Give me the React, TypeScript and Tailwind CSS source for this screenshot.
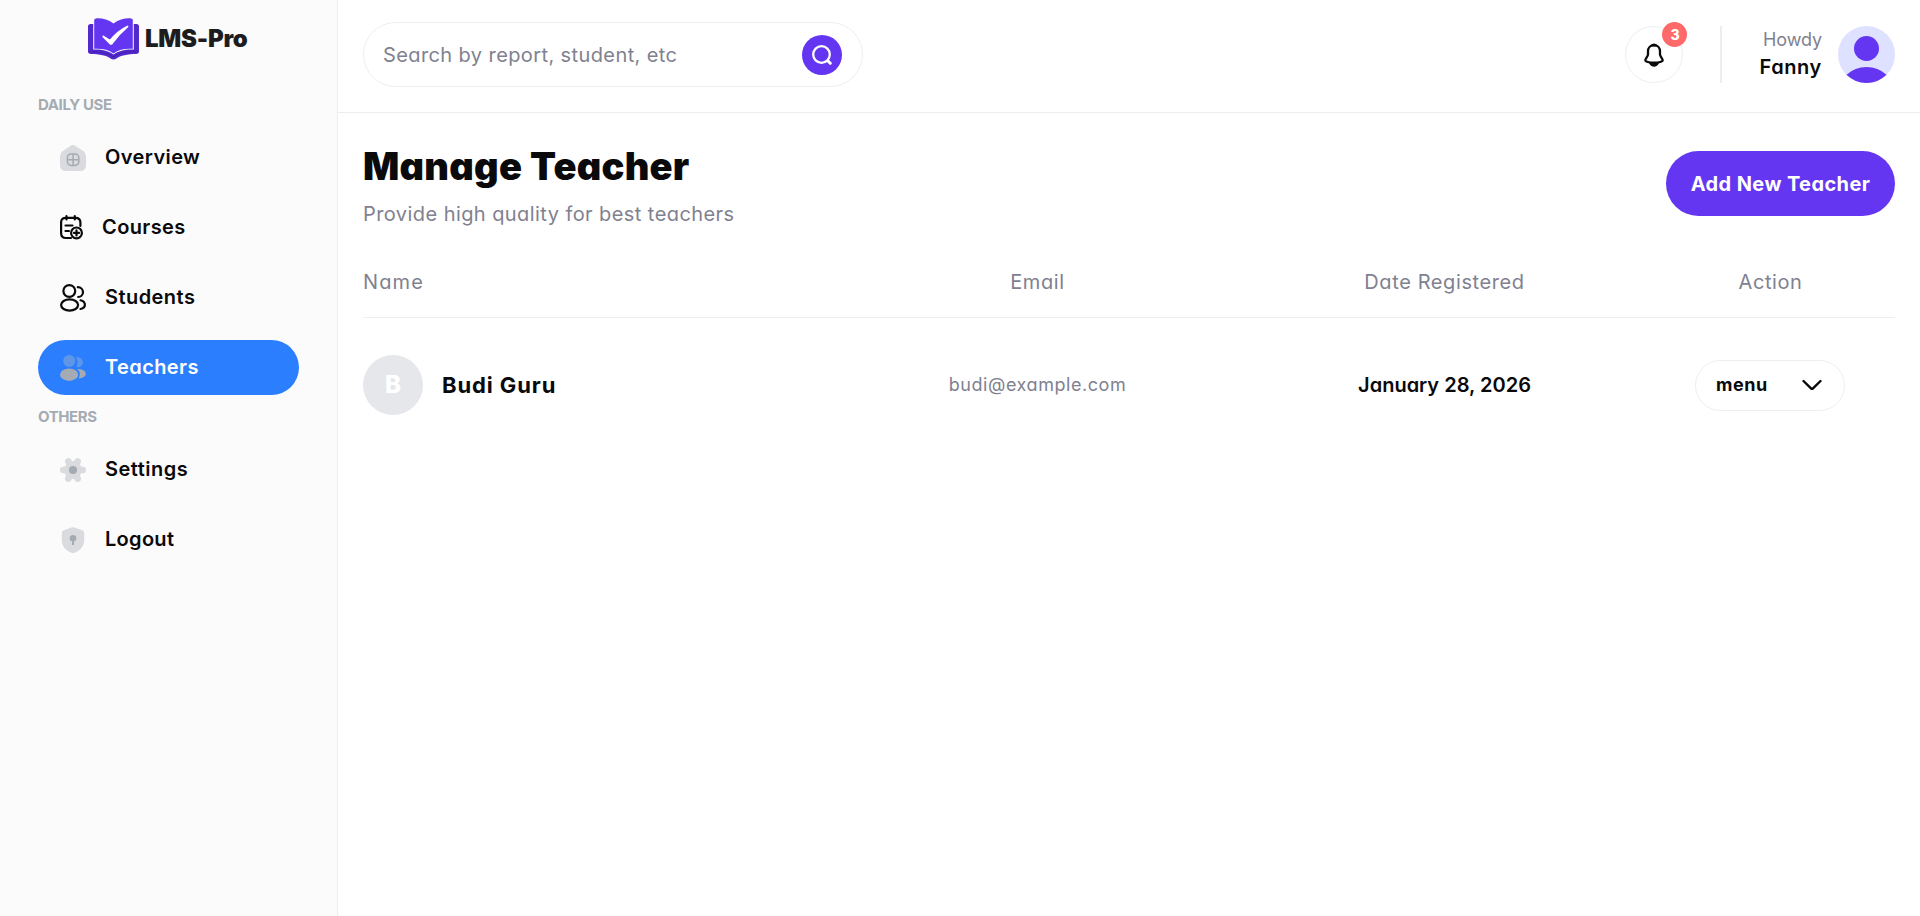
import type { ReactNode } from 'react'

interface NavItem {
  label: string
  icon: ReactNode
  tracking: string
  active?: boolean
}

interface Teacher {
  name: string
  email: string
  registered: string
}

function LogoMark() {
  return (
    <svg width="51" height="42" viewBox="0 0 51 42" fill="none">
      <path d="M0 8.5C0 7 1 6 2.5 6H48.500C50 6 51 7 51 8.500V33.500C51 35 50 36 48 36C40 36 32 37.500 28.500 40.500Q25.500 42.500 22.500 40.500C19 37.500 11 36 3 36C1 36 0 35 0 33.500Z" fill="#5229cc" />
      <path d="M5.200 5.500H45.800V31.600C37 31.200 31 32.600 25.500 36.600C20 32.600 14 31.200 5.200 31.600Z" fill="#fbfbfb" />
      <path d="M6.200 2Q6.200 .5 8 .4C14 0 20 1.500 25.500 5.500C31 1.500 37 0 43 .4Q44.800 .5 44.800 2V30.800C37 30.300 31 31.500 25.500 35.500C20 31.500 14 30.300 6.200 30.800Z" fill="#6436f1" />
      <path d="M15.300 18.500L22 22.800C27 16.500 32 12 39.500 8.500C33 14 28 19.500 24 25.300Q23 26.500 22 25.300Z" fill="#fff" stroke="#fff" strokeWidth="1.800" strokeLinejoin="round" />
      <path d="M1.500 33.500C12 33.500 20 35 25.500 39C31 35 39 33.500 49.500 33.500" stroke="#4520ae" strokeWidth="1.200" />
    </svg>
  )
}

function HomeIcon() {
  return (
    <svg width="26" height="26" viewBox="0 0 26 26" fill="none">
      <path d="M10.300.9Q13-.9 15.700.9L23.500 6.200Q26 8 26 11V20Q26 26 20 26H6Q0 26 0 20V11Q0 8 2.500 6.200Z" fill="#d9dbdf" />
      <rect x="7.400" y="9" width="11.400" height="11.400" rx="3.800" stroke="#a5abb2" strokeWidth="1.500" />
      <path d="M13.100 9V20.400M7.400 14.700H18.800" stroke="#a5abb2" strokeWidth="1.500" />
    </svg>
  )
}

function CoursesIcon() {
  return (
    <svg width="23" height="25" viewBox="0 0 23 25" fill="none" stroke="#0a090b" strokeWidth="2.200" strokeLinecap="round">
      <path d="M11 23H6Q1.100 23 1.100 18V7.500Q1.100 2.800 6 2.800H15.500Q20.400 2.800 20.400 7.500V11" />
      <path d="M6.500 1.200V4.500M14.800 1.200V4.500M5.500 10.500H12.500M5.500 16H9" />
      <circle cx="16.500" cy="17.900" r="5.400" />
      <path d="M16.500 15.400V20.400M14 17.900H19" />
    </svg>
  )
}

function StudentsIcon() {
  return (
    <svg width="26" height="28" viewBox="0 0 26 28" fill="none" stroke="#0a090b" strokeWidth="2.200" strokeLinecap="round">
      <circle cx="9.300" cy="7" r="5.900" />
      <ellipse cx="9.600" cy="21" rx="8.500" ry="5.600" />
      <path d="M17.800 3.200C20.900 3.200 23 5.500 23 8.200C23 10.800 20.900 12.900 18.200 13" />
      <path d="M20.500 16.300C23.500 17.100 24.900 19 24.900 20.800C24.900 22.800 23 24.500 20.500 25" />
    </svg>
  )
}

function TeachersIcon() {
  return (
    <svg width="26" height="26" viewBox="0 0 26 26">
      <circle cx="9.200" cy="6" r="6" fill="#5f97e6" />
      <path d="M16.200 12.100C18 9 18 5.500 16 2.300C20 1.700 22.800 4 22.800 7.200C22.800 10.500 19.800 12.700 16.200 12.100Z" fill="#5f97e6" />
      <ellipse cx="9.100" cy="19.700" rx="9.100" ry="6.200" fill="#a5abb2" />
      <path d="M17 14C20.500 16.500 20.500 20.500 18.500 23.300C22.500 23 25.800 21.500 25.800 18.700C25.800 16 22 14 17 14Z" fill="#a5abb2" />
    </svg>
  )
}

function SettingsIcon() {
  return (
    <svg width="26" height="24" viewBox="0 0 26 24">
      <g stroke="#d9dbdf" strokeWidth="6.600" strokeLinecap="round">
        <path d="M3.300 12H22.700M8.300 3.400L17.700 20.600M17.700 3.400L8.300 20.600" />
      </g>
      <circle cx="13" cy="12" r="9" fill="#d9dbdf" />
      <circle cx="13" cy="12" r="4.100" fill="#a5abb2" />
    </svg>
  )
}

function LogoutIcon() {
  return (
    <svg width="26" height="26" viewBox="0 0 26 26">
      <path d="M11.500.4Q13-.1 14.500.4L22.300 3.200Q24.200 4 24.200 6V13C24.200 19.500 19.500 24 14.500 25.700Q13 26.200 11.500 25.700C6.500 24 1.800 19.500 1.800 13V6Q1.800 4 3.700 3.200Z" fill="#d9dbdf" />
      <circle cx="13" cy="11.200" r="3.300" fill="#a5abb2" />
      <path d="M13 12V17.300" stroke="#a5abb2" strokeWidth="2" strokeLinecap="round" />
    </svg>
  )
}

function SearchIcon() {
  return (
    <svg width="20" height="20" viewBox="0 0 20 20" fill="none" stroke="#fff" strokeWidth="2.300" strokeLinecap="round">
      <circle cx="9.500" cy="9.500" r="8.300" />
      <path d="M16.400 16.400L18.300 18.300" strokeWidth="3" />
    </svg>
  )
}

function BellIcon() {
  return (
    <svg width="20" height="24" viewBox="0 0 20 24" fill="none">
      <path d="M10 2.200C6.300 2.200 4 5 4 8.200V11.500C4 13.300 1.300 15.800 1.300 17.300C1.300 18.800 5.500 19.600 10 19.600C14.500 19.600 18.700 18.800 18.700 17.300C18.700 15.800 16 13.300 16 11.500V8.200C16 5 13.700 2.200 10 2.200Z" stroke="#0a090b" strokeWidth="2.300" />
      <path d="M6.500 2.400Q10-1.600 13.500 2.400V3.400H6.500Z" fill="#0a090b" />
      <path d="M5 20H15Q13.200 23.800 10 23.800T5 20Z" fill="#0a090b" />
    </svg>
  )
}

const dailyItems: NavItem[] = [
  { label: 'Overview', icon: <HomeIcon />, tracking: 'tracking-[0.4px]' },
  { label: 'Courses', icon: <CoursesIcon />, tracking: 'tracking-[0.4px]' },
  { label: 'Students', icon: <StudentsIcon />, tracking: 'tracking-[0.45px]' },
  { label: 'Teachers', icon: <TeachersIcon />, tracking: 'tracking-[0.4px]', active: true },
]

const otherItems: NavItem[] = [
  { label: 'Settings', icon: <SettingsIcon />, tracking: 'tracking-[0.5px]' },
  { label: 'Logout', icon: <LogoutIcon />, tracking: 'tracking-[0.3px]' },
]

const teachers: Teacher[] = [{ name: 'Budi Guru', email: 'budi@example.com', registered: 'January 28, 2026' }]

function NavGroup({ title, items }: { title: string; items: NavItem[] }) {
  return (
    <div className="flex flex-col gap-[14px]">
      <h3 className="text-[15px] leading-[22px] font-bold tracking-[-0.4px] text-[#a5abb2]">{title}</h3>
      <ul className="flex flex-col gap-[15px]">
        {items.map((item) => (
          <li key={item.label}>
            <a
              href="#"
              className={`flex h-[55px] items-center gap-[19px] rounded-full px-[22px] text-xl font-semibold ${item.tracking} ${
                item.active ? 'bg-[#2b7fff] text-white' : 'text-[#0a090b]'
              }`}
            >
              {item.icon}
              <span className="pb-px">{item.label}</span>
            </a>
          </li>
        ))}
      </ul>
    </div>
  )
}

function Sidebar() {
  return (
    <aside className="flex w-[338px] shrink-0 flex-col border-r border-[#eeeeee] bg-[#fbfbfb] px-[38px] pt-[18px]">
      <div className="flex h-[42px] items-center gap-[6px] pl-[50px]">
        <LogoMark />
        <span className="text-2xl font-black tracking-[-0.25px] text-[#1d1d1f]">LMS-Pro</span>
      </div>
      <nav className="mt-[34px] flex flex-col gap-[11px]">
        <NavGroup title="DAILY USE" items={dailyItems} />
        <NavGroup title="OTHERS" items={otherItems} />
      </nav>
    </aside>
  )
}

function TopBar() {
  return (
    <header className="flex h-[113px] items-start justify-between border-b border-[#eeeeee] px-[25px] pt-[22px]">
      <form className="flex h-[65px] w-[500px] items-center justify-between rounded-full border border-[#eeeeee] pr-5 pl-[19px]">
        <input
          type="text"
          placeholder="Search by report, student, etc"
          className="w-[380px] text-xl tracking-[0.4px] outline-none placeholder:text-[#7f8190]"
        />
        <button type="button" className="flex size-10 items-center justify-center rounded-full bg-[#6436f1]">
          <SearchIcon />
        </button>
      </form>
      <div className="mt-1 flex h-[57px] items-center">
        <button type="button" className="relative flex h-[57px] w-[58px] items-center justify-center rounded-full border border-[#eeeeee]">
          <BellIcon />
          <span className="absolute -top-[5px] -right-[5px] flex size-[25px] items-center justify-center rounded-full bg-[#ff6969] pb-px text-[14px] font-extrabold text-white">
            3
          </span>
        </button>
        <div className="ml-[37px] h-full w-[2px] bg-[#eeeeee]" />
        <div className="ml-[37px] flex flex-col items-end pb-px">
          <span className="text-lg leading-[27px] tracking-[-0.1px] text-[#7f8190]">Howdy</span>
          <span className="text-xl leading-[29px] font-semibold tracking-[0.6px] text-[#0a090b]">Fanny</span>
        </div>
        <svg className="ml-4" width="57" height="57" viewBox="0 0 57 57">
          <circle cx="28.500" cy="28.500" r="28.500" fill="#dee1ff" />
          <circle cx="28.500" cy="22.500" r="12.500" fill="#6436f1" />
          <path d="M8.500 48.700Q17 41 28.500 41T48.500 48.700Q40 57 28.500 57T8.500 48.700Z" fill="#6436f1" />
        </svg>
      </div>
    </header>
  )
}

function TeacherTable() {
  return (
    <section className="mt-[38px]">
      <div className="grid grid-cols-[469px_411px_403px_249px] border-b border-[#eeeeee] pb-5 text-xl leading-[30px] tracking-[0.6px] text-[#7f8190]">
        <span className="tracking-[1.1px]">Name</span>
        <span className="text-center">Email</span>
        <span className="text-center">Date Registered</span>
        <span className="text-center">Action</span>
      </div>
      {teachers.map((t) => (
        <div key={t.email} className="grid grid-cols-[469px_411px_403px_249px] items-center pt-[37px]">
          <div className="flex items-center gap-[19px]">
            <div className="flex size-[60px] items-center justify-center rounded-full bg-[#e5e7eb] text-2xl font-extrabold text-white">
              {t.name[0]}
            </div>
            <span className="text-[22px] font-bold tracking-[0.9px]">{t.name}</span>
          </div>
          <span className="text-center text-lg tracking-[0.55px] text-[#7f8190]">{t.email}</span>
          <span className="text-center text-xl font-semibold">{t.registered}</span>
          <button type="button" className="mr-px flex h-[51px] w-[150px] items-center justify-between justify-self-center rounded-full border border-[#eeeeee] pr-[22px] pl-[20px] text-lg font-bold tracking-[0.55px]">
            menu
            <svg width="20" height="12" viewBox="0 0 20 12" fill="none" stroke="#0a090b" strokeWidth="2.400" strokeLinecap="round" strokeLinejoin="round">
              <path d="M1.500 2L9 9.300Q10 10.300 11 9.300L18.500 2" />
            </svg>
          </button>
        </div>
      ))}
    </section>
  )
}

export default function App() {
  return (
    <div className="flex min-h-screen bg-white font-['Inter',sans-serif] text-[#0a090b] [font-feature-settings:'cv11']">
      <Sidebar />
      <main className="flex-1">
        <TopBar />
        <div className="px-[25px] pt-[25px]">
          <div className="flex items-center justify-between">
            <div className="flex flex-col gap-[5px]">
              <h1 className="text-[38px] leading-[56px] font-black tracking-[0.25px]">Manage Teacher</h1>
              <p className="text-xl leading-[30px] tracking-[0.43px] text-[#7f8190]">Provide high quality for best teachers</p>
            </div>
            <a href="#" className="flex h-[65px] w-[229px] items-center justify-center rounded-full bg-[#6436f1] text-xl font-bold tracking-[0.4px] text-white">
              Add New Teacher
            </a>
          </div>
          <TeacherTable />
        </div>
      </main>
    </div>
  )
}
